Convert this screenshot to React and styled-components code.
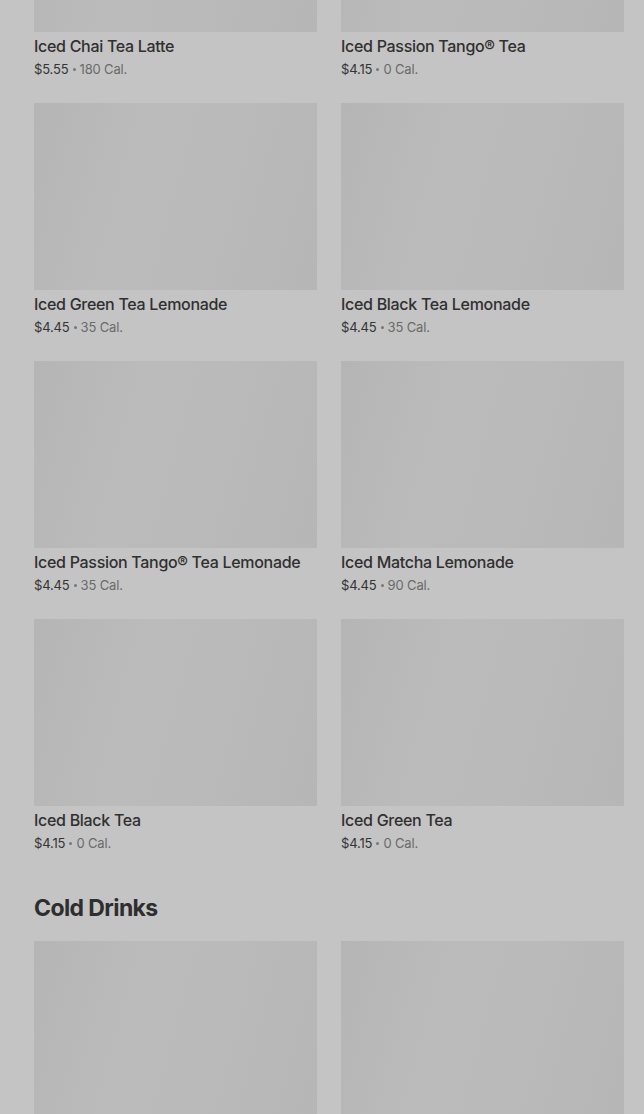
import React from 'react'
import styled, { createGlobalStyle } from 'styled-components'

const GlobalStyle = createGlobalStyle`
  html, body {
    margin: 0;
    padding: 0;
    background: #c4c4c4;
    font-family: 'Inter', 'Liberation Sans', sans-serif;
    overflow: hidden;
  }
`

const Page = styled.div`
  width: 644px;
  height: 1114px;
  overflow: hidden;
  background: #c4c4c4;
`

const Scroller = styled.div`
  margin-top: -155px;
  padding: 0 20px 0 34px;
`

const Grid = styled.div`
  display: grid;
  grid-template-columns: 1fr 1fr;
  column-gap: 24px;
  row-gap: 24px;
`

const Card = styled.div`
  display: flex;
  flex-direction: column;
`

const Thumb = styled.div`
  height: 187px;
  background: linear-gradient(105deg, #b5b5b5 0%, #bbbbbb 35%, #bababa 60%, #b6b6b6 100%);
`

const Name = styled.div`
  margin-top: 3px;
  font-size: 16px;
  line-height: 22px;
  font-weight: 500;
  color: #303030;
  letter-spacing: -0.3px;
`

const Meta = styled.div`
  margin-top: 2px;
  height: 20px;
  font-size: 13px;
  line-height: 20px;
  color: #6a6a6a;
  letter-spacing: -0.15px;
`

const Price = styled.span`
  color: #343434;
`

const Dot = styled.span`
  display: inline-block;
  width: 3px;
  height: 3px;
  border-radius: 50%;
  background: #777;
  margin: 0 4px;
  vertical-align: 3px;
`

const SectionTitle = styled.h2`
  margin: 39px 0 17px;
  font-size: 23px;
  line-height: 32px;
  font-weight: 700;
  color: #2e2e2e;
  letter-spacing: -0.6px;
`

const teas = [
  { name: 'Iced Chai Tea Latte', price: '$5.55', cal: '180 Cal.' },
  { name: 'Iced Passion Tango® Tea', price: '$4.15', cal: '0 Cal.' },
  { name: 'Iced Green Tea Lemonade', price: '$4.45', cal: '35 Cal.' },
  { name: 'Iced Black Tea Lemonade', price: '$4.45', cal: '35 Cal.' },
  { name: 'Iced Passion Tango® Tea Lemonade', price: '$4.45', cal: '35 Cal.' },
  { name: 'Iced Matcha Lemonade', price: '$4.45', cal: '90 Cal.' },
  { name: 'Iced Black Tea', price: '$4.15', cal: '0 Cal.' },
  { name: 'Iced Green Tea', price: '$4.15', cal: '0 Cal.' },
]

const Item = ({ item }) => (
  <Card>
    <Thumb />
    {item && (
      <>
        <Name>{item.name}</Name>
        <Meta>
          <Price>{item.price}</Price>
          <Dot />
          {item.cal}
        </Meta>
      </>
    )}
  </Card>
)

const App = () => (
  <Page>
    <GlobalStyle />
    <Scroller>
      <Grid>
        {teas.map((t) => (
          <Item key={t.name} item={t} />
        ))}
      </Grid>
      <SectionTitle>Cold Drinks</SectionTitle>
      <Grid>
        <Item />
        <Item />
      </Grid>
    </Scroller>
  </Page>
)

export default App
